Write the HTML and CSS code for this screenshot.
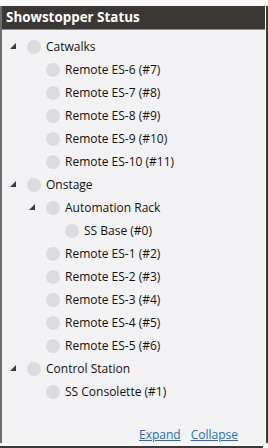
FILE: index.html
```html
<!DOCTYPE html>
<html>
<head>
<meta charset="utf-8">
<link rel="stylesheet" href="styles.css">
</head>
<body>
<div class="frame">
  <div class="panel">
    <div class="header">Showstopper Status</div>
    <div class="tree">
      <div class="row d0"><span class="exp"><svg width="6" height="6" viewBox="0 0 6 6"><polygon points="6,0 6,6 0,6"/></svg></span><span class="dot"></span><span class="label">Catwalks</span></div>
      <div class="row d1"><span class="exp"></span><span class="dot"></span><span class="label">Remote ES-6 (#7)</span></div>
      <div class="row d1"><span class="exp"></span><span class="dot"></span><span class="label">Remote ES-7 (#8)</span></div>
      <div class="row d1"><span class="exp"></span><span class="dot"></span><span class="label">Remote ES-8 (#9)</span></div>
      <div class="row d1"><span class="exp"></span><span class="dot"></span><span class="label">Remote ES-9 (#10)</span></div>
      <div class="row d1"><span class="exp"></span><span class="dot"></span><span class="label">Remote ES-10 (#11)</span></div>
      <div class="row d0"><span class="exp"><svg width="6" height="6" viewBox="0 0 6 6"><polygon points="6,0 6,6 0,6"/></svg></span><span class="dot"></span><span class="label">Onstage</span></div>
      <div class="row d1"><span class="exp"><svg width="6" height="6" viewBox="0 0 6 6"><polygon points="6,0 6,6 0,6"/></svg></span><span class="dot"></span><span class="label">Automation Rack</span></div>
      <div class="row d2"><span class="exp"></span><span class="dot"></span><span class="label">SS Base (#0)</span></div>
      <div class="row d1"><span class="exp"></span><span class="dot"></span><span class="label">Remote ES-1 (#2)</span></div>
      <div class="row d1"><span class="exp"></span><span class="dot"></span><span class="label">Remote ES-2 (#3)</span></div>
      <div class="row d1"><span class="exp"></span><span class="dot"></span><span class="label">Remote ES-3 (#4)</span></div>
      <div class="row d1"><span class="exp"></span><span class="dot"></span><span class="label">Remote ES-4 (#5)</span></div>
      <div class="row d1"><span class="exp"></span><span class="dot"></span><span class="label">Remote ES-5 (#6)</span></div>
      <div class="row d0"><span class="exp"><svg width="6" height="6" viewBox="0 0 6 6"><polygon points="6,0 6,6 0,6"/></svg></span><span class="dot"></span><span class="label">Control Station</span></div>
      <div class="row d1"><span class="exp"></span><span class="dot"></span><span class="label">SS Consolette (#1)</span></div>
    </div>
    <div class="links"><a href="#">Expand</a><a href="#">Collapse</a></div>
  </div>
  <div class="shadow-bottom"></div>
</div>
</body>
</html>
```
FILE: styles.css
```css
html, body {
  margin: 0;
  padding: 0;
  background: #f9f9f9;
}
body {
  width: 268px;
  height: 448px;
  overflow: hidden;
  font-family: "Open Sans", "Noto Sans", sans-serif;
}
.frame {
  width: 268px;
  height: 448px;
  padding-top: 6px;
  box-sizing: border-box;
  display: flex;
  flex-direction: column;
}
.panel {
  width: 265px;
  height: 437px;
  box-sizing: border-box;
  border-left: 2px solid #6c6c6c;
  background: #f3f3f5;
  box-shadow: 1px 0 0 0 #f9f9f9, 3px 0 0 0 #3a3a3a;
  display: flex;
  flex-direction: column;
}
.header {
  height: 24px;
  box-sizing: border-box;
  background: #3b3735;
  border-bottom: 1px solid #8c8c8c;
  color: #ffffff;
  font-weight: 700;
  font-size: 13.4px;
  line-height: 23px;
  padding-left: 4px;
}
.tree {
  padding-top: 5px;
  flex: 1;
}
.row {
  height: 23px;
  display: flex;
  align-items: center;
  font-size: 12px;
  color: #111111;
}
.d0 { padding-left: 8px; }
.d1 { padding-left: 27px; }
.d2 { padding-left: 46px; }
.exp {
  width: 6px;
  height: 6px;
  margin-right: 11px;
  display: flex;
  position: relative;
  top: -1px;
}
.exp svg {
  display: block;
  fill: #3a3a3a;
}
.dot {
  width: 14px;
  height: 14px;
  border-radius: 50%;
  background: #dcdcdf;
  margin-right: 5px;
  flex: none;
}
.label {
  white-space: nowrap;
}
.links {
  display: flex;
  justify-content: flex-end;
  gap: 10px;
  padding-right: 27px;
  padding-bottom: 0;
  font-size: 12px;
  line-height: 16px;
}
.links a {
  color: #1a6ccf;
  text-decoration: underline;
}
.shadow-bottom {
  width: 263px;
  height: 2px;
  margin-top: 3px;
  background: #3a3a3a;
}
```
